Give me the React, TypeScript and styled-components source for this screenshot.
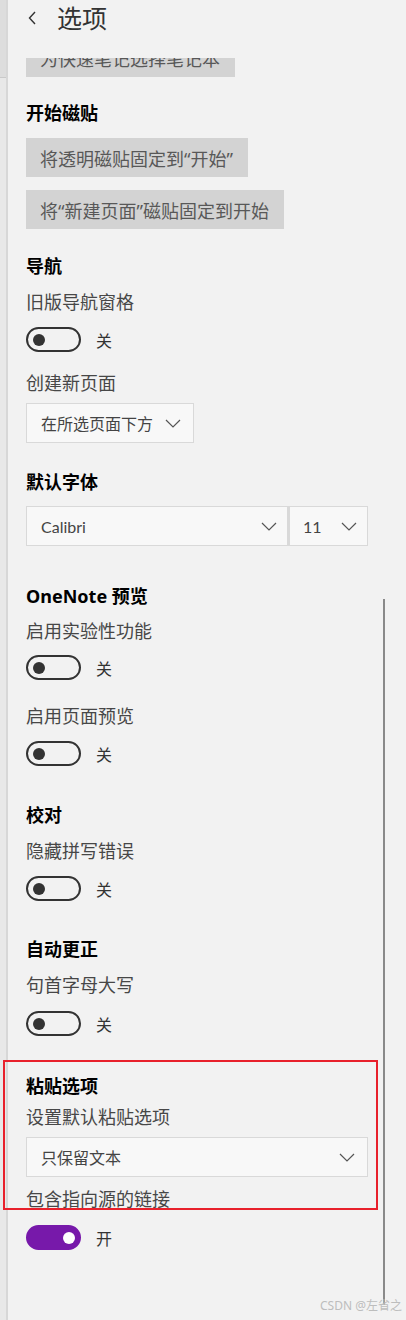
import styled, { createGlobalStyle } from "styled-components";

const GlobalStyle = createGlobalStyle`
  html, body {
    margin: 0;
    padding: 0;
    background: #f2f2f2;
  }
  body {
    font-family: "Noto Sans", "Noto Sans CJK SC", sans-serif;
  }
`;

const Page = styled.div`
  position: relative;
  display: flex;
  width: 406px;
  height: 1320px;
  overflow: hidden;
  background: #f2f2f2;
`;

// left edge of the window, darker where the title bar is
const Gutter = styled.div`
  width: 6px;
  flex-shrink: 0;
  display: flex;
  flex-direction: column;
  background: #e8e8e8;
  border-right: 2px solid #d7d7d7;
`;

const GutterTop = styled.div`
  height: 77px;
  background: #dddddd;
  border-bottom: 1px solid #c9c9c9;
`;

const Panel = styled.div`
  flex: 1;
  display: flex;
  flex-direction: column;
  padding: 0 38px 0 18px;
`;

const Header = styled.div`
  height: 36px;
  padding-bottom: 22px;
  display: flex;
  align-items: center;
  margin-left: 2px;
  flex-shrink: 0;
`;

const Title = styled.h1`
  margin: 0 0 0 19px;
  font-size: 25px;
  font-weight: 400;
  color: #333;
  line-height: 36px;
`;

const Clip = styled.div`
  height: 19px;
  overflow: hidden;
  display: flex;
  flex-direction: column;
  justify-content: flex-end;
  flex-shrink: 0;
`;

const Heading = styled.h2<{ $mt?: number }>`
  margin: ${(p) => p.$mt ?? 0}px 0 0;
  font-size: 18px;
  font-weight: 700;
  line-height: 24px;
  color: #000;
`;

const Label = styled.div<{ $mt?: number }>`
  margin-top: ${(p) => p.$mt ?? 0}px;
  font-size: 18px;
  line-height: 24px;
  color: #474747;
`;

const ActionButton = styled.button<{ $mt?: number }>`
  align-self: flex-start;
  flex-shrink: 0;
  margin-top: ${(p) => p.$mt ?? 0}px;
  height: 39px;
  padding: 0 15px 0 14px;
  border: 0;
  background: #d3d3d3;
  color: #585858;
  font-family: inherit;
  font-size: 18px;
  white-space: nowrap;
`;

const ToggleRow = styled.div<{ $mt?: number }>`
  margin-top: ${(p) => p.$mt ?? 0}px;
  display: flex;
  align-items: center;
  gap: 15px;
  height: 25px;
`;

const Track = styled.div<{ $on?: boolean }>`
  box-sizing: border-box;
  width: 55px;
  height: 25px;
  border-radius: 13px;
  border: 2px solid ${(p) => (p.$on ? "#7719aa" : "#333")};
  background: ${(p) => (p.$on ? "#7719aa" : "transparent")};
  display: flex;
  align-items: center;
  justify-content: ${(p) => (p.$on ? "flex-end" : "flex-start")};
  padding: 0 4px 0 5px;
`;

const Knob = styled.div<{ $on?: boolean }>`
  width: 12px;
  height: 12px;
  border-radius: 50%;
  background: ${(p) => (p.$on ? "#fff" : "#333")};
`;

const ToggleText = styled.span`
  font-size: 16px;
  color: #333;
`;

const Select = styled.div<{ $mt?: number; $full?: boolean }>`
  box-sizing: border-box;
  margin-top: ${(p) => p.$mt ?? 0}px;
  align-self: ${(p) => (p.$full ? "stretch" : "flex-start")};
  height: 40px;
  display: flex;
  align-items: center;
  justify-content: space-between;
  gap: 12px;
  padding: 0 12px 0 14px;
  background: #f8f8f8;
  border: 1px solid #d9d9d9;
  font-size: 16px;
  color: #444;
`;

const FontRow = styled.div<{ $mt?: number }>`
  margin-top: ${(p) => p.$mt ?? 0}px;
  display: grid;
  grid-template-columns: 262px 80px;
  height: 40px;
`;

const FontSelect = styled(Select)`
  height: 40px;
  margin: 0;
  padding-right: 10px;
  & + & {
    border-left: 2px solid #d9d9d9;
    padding-left: 13px;
  }
`;

const Latin = styled.span`
  font-family: "Lato", "Noto Sans", sans-serif;
  font-size: 16px;
`;

const Highlight = styled.div<{ $mt?: number }>`
  position: relative;
  margin-top: ${(p) => p.$mt ?? 0}px;
  display: flex;
  flex-direction: column;
`;

// red annotation frame drawn over the paste section
const Frame = styled.div`
  position: absolute;
  top: -14px;
  left: -23px;
  right: -10px;
  bottom: 1px;
  border: 2px solid #e8202b;
  pointer-events: none;
`;

const Scrollbar = styled.div`
  position: absolute;
  left: 383px;
  top: 599px;
  width: 2px;
  height: 706px;
  background: #8a8a8a;
`;

const Watermark = styled.div`
  position: absolute;
  right: 4px;
  bottom: 6px;
  font-size: 12px;
  color: #bdbdbd;
`;

const Chevron = () => (
  <svg width="16" height="9" viewBox="0 0 16 9">
    <polyline points="1,1 8,8 15,1" fill="none" stroke="#555" strokeWidth="1.2" />
  </svg>
);

const BackArrow = () => (
  <svg width="10" height="14" viewBox="0 0 10 14">
    <polyline points="7,1 1.5,7 7,13" fill="none" stroke="#333" strokeWidth="1.4" />
  </svg>
);

const Toggle = ({ on, mt }: { on?: boolean; mt?: number }) => (
  <ToggleRow $mt={mt}>
    <Track $on={on}>
      <Knob $on={on} />
    </Track>
    <ToggleText>{on ? "开" : "关"}</ToggleText>
  </ToggleRow>
);

const App = () => {
  return (
    <>
      <GlobalStyle />
      <Page>
        <Gutter>
          <GutterTop />
        </Gutter>
        <Panel>
          <Header>
            <BackArrow />
            <Title>选项</Title>
          </Header>
          <Clip>
            <ActionButton>为快速笔记选择笔记本</ActionButton>
          </Clip>

          <Heading $mt={24}>开始磁贴</Heading>
          <ActionButton $mt={13}>将透明磁贴固定到“开始”</ActionButton>
          <ActionButton $mt={13}>将“新建页面”磁贴固定到开始</ActionButton>

          <Heading $mt={25}>导航</Heading>
          <Label $mt={12}>旧版导航窗格</Label>
          <Toggle mt={13} />
          <Label $mt={19}>创建新页面</Label>
          <Select $mt={8}>
            <span>在所选页面下方</span>
            <Chevron />
          </Select>

          <Heading $mt={27}>默认字体</Heading>
          <FontRow $mt={12}>
            <FontSelect>
              <Latin>Calibri</Latin>
              <Chevron />
            </FontSelect>
            <FontSelect>
              <Latin>11</Latin>
              <Chevron />
            </FontSelect>
          </FontRow>

          <Heading $mt={38}>OneNote 预览</Heading>
          <Label $mt={11}>启用实验性功能</Label>
          <Toggle mt={12} />
          <Label $mt={24}>启用页面预览</Label>
          <Toggle mt={13} />

          <Heading $mt={37}>校对</Heading>
          <Label $mt={12}>隐藏拼写错误</Label>
          <Toggle mt={13} />

          <Heading $mt={36}>自动更正</Heading>
          <Label $mt={12}>句首字母大写</Label>
          <Toggle mt={14} />

          <Highlight $mt={38}>
            <Heading>粘贴选项</Heading>
            <Label $mt={7}>设置默认粘贴选项</Label>
            <Select $mt={8} $full>
              <span>只保留文本</span>
              <Chevron />
            </Select>
            <Label $mt={10}>包含指向源的链接</Label>
            <Frame />
          </Highlight>
          <Toggle on mt={14} />
        </Panel>
        <Scrollbar />
        <Watermark>CSDN @左省之</Watermark>
      </Page>
    </>
  );
};

export default App;
